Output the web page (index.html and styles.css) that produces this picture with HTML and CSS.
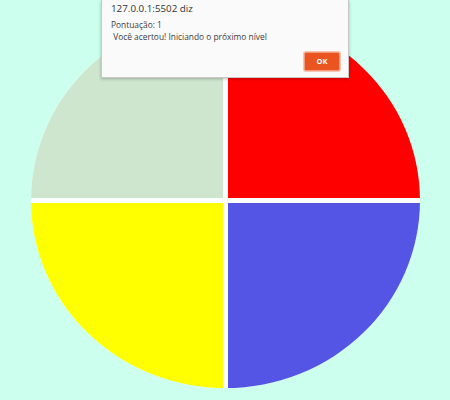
FILE: index.html
```html
<!DOCTYPE html>
<html lang="pt-BR">
<head>
<meta charset="utf-8">
<title>Genius</title>
<link rel="stylesheet" href="styles.css">
</head>
<body>
<main class="board">
  <div class="quad quad-green"></div>
  <div class="quad quad-red"></div>
  <div class="quad quad-yellow"></div>
  <div class="quad quad-blue"></div>
</main>
<div class="alert" role="dialog">
  <div class="alert-title">127.0.0.1:5502 diz</div>
  <div class="alert-msg">Pontuação: 1
 Você acertou! Iniciando o próximo nível</div>
  <div class="alert-actions"><button class="alert-ok">OK</button></div>
</div>
</body>
</html>
```
FILE: styles.css
```css
html, body {
  margin: 0;
  padding: 0;
  height: 100%;
}
body {
  background: #ccffee;
  font-family: "Open Sans", "DejaVu Sans", sans-serif;
  overflow: hidden;
}
.board {
  width: 389px;
  height: 375px;
  margin: 13px auto 0;
  display: grid;
  grid-template-columns: 1fr 1fr;
  grid-template-rows: 1fr 1fr;
  gap: 5px;
  background: #ffffff;
  border-radius: 50%;
  overflow: hidden;
}
.quad-green { background: #cde6cd; }
.quad-red { background: #ff0000; }
.quad-yellow { background: #ffff00; }
.quad-blue { background: #5555e5; }

.alert {
  position: absolute;
  left: 101px;
  top: 0;
  width: 248px;
  box-sizing: border-box;
  height: 78px;
  background: #fafafa;
  border: 1px solid #c8c8c8;
  border-top: none;
  box-shadow: 0 1px 3px rgba(0,0,0,0.25);
  padding: 3px 8px 0 9px;
  color: #3c3c3c;
}
.alert-title {
  font-size: 9.8px;
  line-height: 12px;
  color: #333;
}
.alert-msg {
  margin-top: 4px;
  font-size: 8.4px;
  line-height: 12px;
  white-space: pre;
  color: #3c3c3c;
}
.alert-actions {
  display: flex;
  justify-content: flex-end;
  margin-top: 9px;
}
.alert-ok {
  width: 36px;
  height: 19px;
  box-sizing: border-box;
  background: #e95420;
  color: #fff;
  border: 1px solid #f29a7c;
  border-radius: 2px;
  box-shadow: 0 0 0 1px #f7c4b2;
  font-family: "Open Sans", sans-serif;
  font-weight: 700;
  font-size: 7.5px;
  padding: 0;
  line-height: 17px;
}
```
